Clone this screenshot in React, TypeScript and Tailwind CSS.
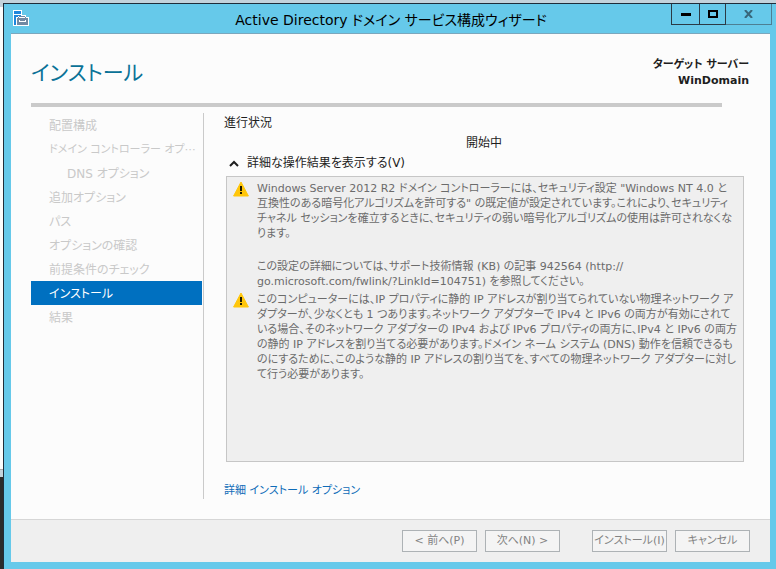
import type { ReactNode } from "react";

type Step = { label: string; nested?: boolean; long?: boolean; current?: boolean };

const steps: Step[] = [
  { label: "配置構成" },
  { label: "ドメイン コントローラー オプ⋯", long: true },
  { label: "DNS オプション", nested: true },
  { label: "追加オプション" },
  { label: "パス" },
  { label: "オプションの確認" },
  { label: "前提条件のチェック" },
  { label: "インストール", current: true },
  { label: "結果" },
];

// Each warning is a list of paragraphs; a paragraph's entries are separated by forced line breaks.
const warnings: string[][][] = [
  [
    [
      'Windows Server 2012 R2 ドメイン コントローラーには、セキュリティ設定 "Windows NT 4.0 と',
      '互換性のある暗号化アルゴリズムを許可する" の既定値が設定されています。これにより、セキュリティ',
      "チャネル セッションを確立するときに、セキュリティの弱い暗号化アルゴリズムの使用は許可されなくなります。",
    ],
    [
      "この設定の詳細については、サポート技術情報 (KB) の記事 942564 (http://",
      "go.microsoft.com/fwlink/?LinkId=104751) を参照してください。",
    ],
  ],
  [
    [
      "このコンピューターには、IP プロパティに静的 IP アドレスが割り当てられていない物理ネットワーク アダプターが、少なくとも 1 つあります。ネットワーク アダプターで IPv4 と IPv6 の両方が有効にされている場合、そのネットワーク アダプターの IPv4 および IPv6 プロパティの両方に、IPv4 と IPv6 の両方の静的 IP アドレスを割り当てる必要があります。ドメイン ネーム システム (DNS) 動作を信頼できるものにするために、このような静的 IP アドレスの割り当てを、すべての物理ネットワーク アダプターに対して行う必要があります。",
    ],
  ],
];

function ServerIcon() {
  return (
    <svg width="16" height="16" viewBox="0 0 16 16" shapeRendering="crispEdges" aria-hidden="true">
      <path d="M0 0h9v5h4v2h3v9H0z" fill="#fff" />
      <path d="M1 1h7v3H1zM1 5h7v1H5v1H3v8H1z" fill="#1e86dc" />
      <path d="M6 6h6v1H6zM5 7h1v1H5zM12 7h1v1h-1zM4 8h11v7H4z" fill="#7189a3" />
      <path d="M6 10h1v1h5v-1h1v2H6z" fill="#fff" />
    </svg>
  );
}

function WarningIcon() {
  return (
    <svg className="shrink-0" width="16" height="16" viewBox="0 0 16 16" aria-hidden="true">
      <path d="M8 1 15.4 15H.6z" fill="#ffc60a" stroke="#ffc60a" strokeLinejoin="round" />
      <path d="M7 5h2v5H7zM7 11h2v2H7z" fill="#1f1a00" />
    </svg>
  );
}

function CaptionButton({ label, className, children }: { label: string; className: string; children: ReactNode }) {
  return (
    <button
      type="button"
      aria-label={label}
      className={`flex h-[21px] items-center justify-center border-r border-b border-[#2b3a45] ${className}`}
    >
      {children}
    </button>
  );
}

function WizardButton({ children }: { children: ReactNode }) {
  return (
    <button
      type="button"
      disabled
      className="flex h-[22px] w-[75px] items-center justify-center border border-[#adb2b5] bg-[#f4f4f4] pt-px text-[11px] whitespace-nowrap text-[#838383]"
    >
      {children}
    </button>
  );
}

export default function App() {
  return (
    <div className="flex min-h-screen flex-col bg-[#c3d3dc] font-['DejaVu_Sans','Noto_Sans_CJK_JP',sans-serif] text-xs text-[#1e1e1e] [font-feature-settings:'palt']">
      <div className="h-[3px]" />
      <div className="flex flex-1">
        <div className="flex w-[3px] flex-col">
          <div className="h-1" />
          <div className="flex-1 bg-[#fcfcfc]" />
          <div className="h-2 border-t border-[#aaa] bg-[#c3d3dc]" />
          <div className="h-[92px] bg-[#2b2b2b]" />
        </div>

        <div className="flex min-w-0 flex-1 flex-col border-t border-l border-[#1f2d3a] bg-[#66c9ea] pr-[6px] pb-[7px] pl-[7px]">
          <header className="-mr-[2px] flex h-[29px] items-start">
            <div className="w-[100px] pt-[6px] pl-[2px]">
              <ServerIcon />
            </div>
            <h1 className="flex-1 pt-[5px] text-center text-sm leading-[22px] whitespace-nowrap text-black">
              Active Directory ドメイン サービス構成ウィザード
            </h1>
            <div className="flex">
              <CaptionButton label="最小化" className="w-[29px] border-l">
                <span className="h-[3px] w-[10px] bg-black" />
              </CaptionButton>
              <CaptionButton label="最大化" className="w-[26px]">
                <span className="h-2 w-[10px] border-2 border-black" />
              </CaptionButton>
              <CaptionButton label="閉じる" className="w-[46px] border-[#4d7f93]">
                <svg width="9" height="8" viewBox="0 0 9 8" aria-hidden="true">
                  <path d="M1 0l7 8M8 0L1 8" stroke="#38677a" strokeWidth="2" />
                </svg>
              </CaptionButton>
            </div>
          </header>

          <div className="flex flex-1 flex-col border-t border-[#7ba7bd] bg-[#fcfcfc]">
            <div className="flex items-start justify-between pt-[23px] pr-[21px] pl-5">
              <h2 className="text-[21px] leading-8 text-[#0a7297]">インストール</h2>
              <p className="text-right text-[11px] leading-4 font-bold">
                ターゲット サーバー
                <br />
                WinDomain
              </p>
            </div>
            <div className="mt-[14px] mr-12 ml-5 h-1 bg-[#cacaca]" />

            <div className="mt-[6px] mb-5 flex flex-1 pr-[26px] pl-5">
              <nav className="w-[173px] shrink-0 border-r border-[#cacaca] pr-px" aria-label="手順">
                <ol className="leading-6 whitespace-nowrap">
                  {steps.map((step) => (
                    <li
                      key={step.label}
                      aria-current={step.current ? "step" : undefined}
                      className={`h-6 pt-px ${step.nested ? "pl-9" : "pl-[18px]"} ${step.long ? "text-[11px]" : ""} ${
                        step.current ? "bg-[#0070c0] text-white" : "text-[#c9c9c9]"
                      }`}
                    >
                      {step.label}
                    </li>
                  ))}
                </ol>
              </nav>

              <main className="flex min-w-0 flex-1 flex-col pl-5">
                <h3 className="leading-5">進行状況</h3>
                <p className="text-center leading-5">開始中</p>
                <button type="button" aria-expanded="true" className="flex items-center gap-2 pl-[5px] leading-5">
                  <svg width="10" height="7" viewBox="0 0 10 7" fill="none" aria-hidden="true">
                    <path d="M1 6l4-4 4 4" stroke="#1e1e1e" strokeWidth="2" />
                  </svg>
                  詳細な操作結果を表示する(V)
                </button>
                <ul className="mt-[3px] ml-[2px] flex flex-1 flex-col gap-[3px] border border-[#c6c6c6] bg-[#efefef] pt-1 pr-1 pl-[6px] text-[11px] text-[#6b6b6b]">
                  {warnings.map((paragraphs, i) => (
                    <li key={i} className="flex gap-2">
                      <WarningIcon />
                      <div className="flex min-w-0 flex-1 flex-col gap-[18px] leading-[15px]">
                        {paragraphs.map((lines, j) => (
                          <p key={j}>
                            {lines.map((line) => (
                              <span key={line} className="block">
                                {line}
                              </span>
                            ))}
                          </p>
                        ))}
                      </div>
                    </li>
                  ))}
                </ul>
                <a href="#options" className="mt-[21px] self-start text-[11px] leading-4 text-[#0f6cb8]">
                  詳細 インストール オプション
                </a>
              </main>
            </div>

            <footer className="flex h-[43px] items-start justify-end gap-8 border-t border-[#d6d6d6] bg-[#efefef] pt-[10px] pr-5">
              <div className="flex gap-2">
                <WizardButton>&lt; 前へ(P)</WizardButton>
                <WizardButton>次へ(N) &gt;</WizardButton>
              </div>
              <div className="flex gap-2">
                <WizardButton>インストール(I)</WizardButton>
                <WizardButton>キャンセル</WizardButton>
              </div>
            </footer>
          </div>
        </div>
      </div>
    </div>
  );
}
